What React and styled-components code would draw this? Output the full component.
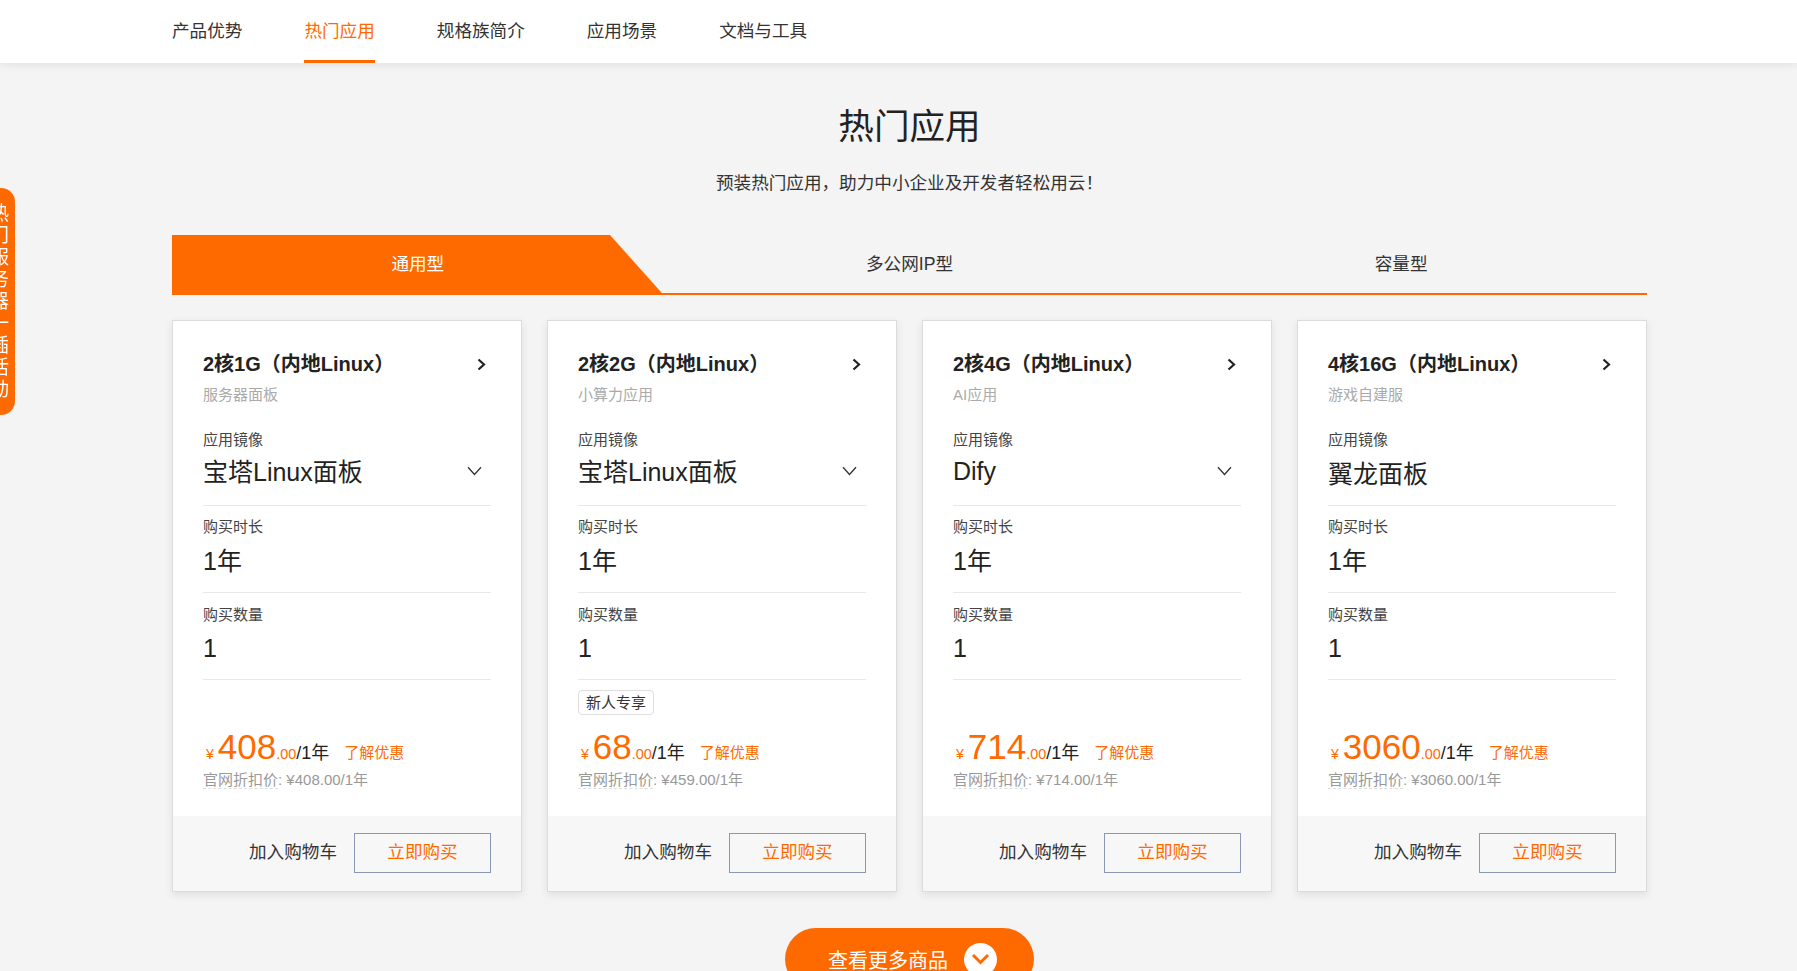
import React from "react";
import styled, { createGlobalStyle } from "styled-components";

const ORANGE = "#ff6a00";

const plans = [
  { title: "2核1G（内地Linux）", desc: "服务器面板", image: "宝塔Linux面板", select: true, price: "408", list: "¥408.00/1年" },
  { title: "2核2G（内地Linux）", desc: "小算力应用", image: "宝塔Linux面板", select: true, price: "68", list: "¥459.00/1年", promo: "新人专享" },
  { title: "2核4G（内地Linux）", desc: "AI应用", image: "Dify", latin: true, select: true, price: "714", list: "¥714.00/1年" },
  { title: "4核16G（内地Linux）", desc: "游戏自建服", image: "翼龙面板", price: "3060", list: "¥3060.00/1年" },
];

const navItems = ["产品优势", "热门应用", "规格族简介", "应用场景", "文档与工具"];
const tabs = ["通用型", "多公网IP型", "容量型"];

const GlobalStyle = createGlobalStyle`
  html, body {
    margin: 0;
    height: 100%;
    overflow: hidden;
    background: #f4f4f4;
    color: #222;
    font-family: "Liberation Sans", "Noto Sans CJK SC", sans-serif;
  }
  * { box-sizing: border-box; }
`;

const Nav = styled.nav`
  height: 63px;
  padding-left: 172px;
  display: flex;
  gap: 62px;
  background: #fff;
  box-shadow: 0 2px 8px rgba(0, 0, 0, 0.08);
  position: relative;
`;

const NavItem = styled.a`
  height: 63px;
  padding-bottom: 1px;
  display: flex;
  align-items: center;
  font-size: 17.6px;
  color: ${(p) => (p.$active ? ORANGE : "#333")};
  border-bottom: 3px solid ${(p) => (p.$active ? ORANGE : "transparent")};
`;

const SideTab = styled.div`
  position: fixed;
  left: 0;
  top: 188px;
  width: 15px;
  height: 227px;
  overflow: hidden;
  display: flex;
  align-items: flex-start;
  justify-content: center;
  background: ${ORANGE};
  border-radius: 0 14px 14px 0;
  color: #fff;
  font-size: 19px;
  letter-spacing: 3px;
  writing-mode: vertical-rl;
`;

const SideText = styled.span`
  margin-right: 4px;
  white-space: nowrap;
`;

const Main = styled.main`
  width: 1475px;
  margin-left: 172px;
`;

const Heading = styled.h2`
  margin: 39px 0 0;
  font-size: 35.6px;
  font-weight: 400;
  line-height: 50px;
  text-align: center;
  color: #222;
`;

const Sub = styled.p`
  margin: 19px 0 0;
  font-size: 17.6px;
  line-height: 24px;
  text-align: center;
  color: #333;
`;

const TabRow = styled.div`
  margin-top: 40px;
  height: 60px;
  display: grid;
  grid-template-columns: repeat(3, 1fr);
  border-bottom: 2px solid ${ORANGE};
`;

const Tab = styled.div`
  height: 60px;
  padding-bottom: 6px;
  display: flex;
  align-items: center;
  justify-content: center;
  font-size: 17.6px;
  color: ${(p) => (p.$active ? "#fff" : "#333")};
  background: ${(p) => (p.$active ? ORANGE : "transparent")};
  clip-path: ${(p) => (p.$active ? "polygon(0 0, 438px 0, 100% 100%, 0 100%)" : "none")};
`;

const Cards = styled.div`
  margin-top: 25px;
  display: grid;
  grid-template-columns: repeat(4, 1fr);
  gap: 25px;
`;

const Card = styled.article`
  height: 572px;
  display: flex;
  flex-direction: column;
  background: #fff;
  border: 1px solid #dcdcdc;
  box-shadow: 0 3px 8px rgba(40, 50, 80, 0.1);
`;

const CardBody = styled.div`
  flex: 1;
  padding: 29px 30px 0;
`;

const TitleRow = styled.div`
  height: 28px;
  display: flex;
  align-items: center;
  justify-content: space-between;
  padding-right: 5px;
`;

const Title = styled.h3`
  margin: 0;
  padding-bottom: 4px;
  font-size: 20px;
  font-weight: 700;
  color: #222;
`;

const Desc = styled.div`
  margin-top: 7px;
  font-size: 15px;
  line-height: 20px;
  color: #aaa;
`;

const Field = styled.div`
  padding: ${(p) => p.$top || "11px"} 0 ${(p) => p.$bottom || "12px"};
  border-bottom: 1px solid #e8e8e8;
`;

const FieldLabel = styled.div`
  font-size: 15px;
  line-height: 20px;
  color: #444;
`;

const FieldValue = styled.div`
  height: 37px;
  padding: 0 9px ${(p) => (p.$latin ? "3px" : "5px")} 0;
  margin-top: ${(p) => (p.$select ? "4px" : "6px")};
  display: flex;
  align-items: center;
  justify-content: space-between;
  font-size: 25px;
  color: #222;
`;

const SelectIcon = styled.svg`
  margin-top: ${(p) => (p.$latin ? "0" : "2px")};
`;

const PriceBlock = styled.div`
  padding-top: 10px;
`;

const PromoSlot = styled.div`
  height: 25px;
`;

const Promo = styled.span`
  display: inline-flex;
  align-items: center;
  height: 25px;
  padding: 0 7px 3px;
  font-size: 15px;
  color: #333;
  background: #fff;
  border: 1px solid #ddd;
  border-radius: 4px;
`;

const PriceRow = styled.div`
  margin-top: 12px;
  height: 40px;
  display: flex;
  align-items: baseline;
  color: ${ORANGE};
  line-height: 40px;
`;

const Yen = styled.span`
  font-size: 14px;
  margin: 0 4px 0 3px;
`;

const Amount = styled.span`
  font-size: 35px;
`;

const Cents = styled.span`
  font-size: 14.4px;
`;

const Period = styled.span`
  font-size: 18px;
  color: #222;
`;

const Learn = styled.a`
  margin-left: 15px;
  font-size: 15px;
  transform: translateY(-1px);
`;

const ListPrice = styled.div`
  margin-top: 3px;
  font-size: 15px;
  line-height: 20px;
  color: #999;
`;

const Dashed = styled.span`
  border-bottom: 1px dashed #ddd;
`;

const CardFoot = styled.div`
  height: 75px;
  padding: 0 30px 2px 0;
  display: flex;
  align-items: center;
  justify-content: flex-end;
  gap: 17px;
  background: #f7f7f7;
`;

const Cart = styled.a`
  padding-bottom: 4px;
  font-size: 17.6px;
  color: #333;
`;

const BuyButton = styled.button`
  width: 137px;
  height: 40px;
  padding: 0 0 4px;
  font-family: inherit;
  font-size: 17.6px;
  color: ${ORANGE};
  background: transparent;
  border: 1px solid #8a97b5;
`;

const MoreWrap = styled.div`
  margin-top: 36px;
  display: flex;
  justify-content: center;
`;

const MoreButton = styled.button`
  width: 249px;
  height: 62px;
  padding: 0 0 0 43px;
  display: flex;
  align-items: center;
  gap: 16px;
  font-family: inherit;
  font-size: 20px;
  color: #fff;
  background: ${ORANGE};
  border: 0;
  border-radius: 31px;
`;

const MoreIcon = styled.span`
  width: 33px;
  height: 33px;
  display: flex;
  align-items: center;
  justify-content: center;
  background: #fff;
  border-radius: 50%;
`;

const ChevronRight = () => (
  <svg width="9" height="13" viewBox="0 0 9 13" fill="none">
    <path d="M1.5 1.5 7 6.5 1.5 11.5" stroke="#222" strokeWidth="2.2" />
  </svg>
);

const ChevronDown = ({ latin }) => (
  <SelectIcon $latin={latin} width="15" height="10" viewBox="0 0 15 10" fill="none">
    <path d="M1 1.2 7.5 8.5 14 1.2" stroke="#333" strokeWidth="1.3" />
  </SelectIcon>
);

const MoreChevron = () => (
  <svg width="19" height="12" viewBox="0 0 19 12" fill="none">
    <path d="M2 2 9.5 9.5 17 2" stroke={ORANGE} strokeWidth="3" />
  </svg>
);

const PlanCard = ({ plan }) => (
  <Card>
    <CardBody>
      <TitleRow>
        <Title>{plan.title}</Title>
        <ChevronRight />
      </TitleRow>
      <Desc>{plan.desc}</Desc>
      <Field $top="25px" $bottom={plan.select ? "14px" : "12px"}>
        <FieldLabel>应用镜像</FieldLabel>
        <FieldValue $select={plan.select} $latin={plan.latin}>
          {plan.image}
          {plan.select && <ChevronDown latin={plan.latin} />}
        </FieldValue>
      </Field>
      <Field>
        <FieldLabel>购买时长</FieldLabel>
        <FieldValue>1年</FieldValue>
      </Field>
      <Field $top="12px" $bottom="11px">
        <FieldLabel>购买数量</FieldLabel>
        <FieldValue $latin>1</FieldValue>
      </Field>
      <PriceBlock>
        <PromoSlot>{plan.promo && <Promo>{plan.promo}</Promo>}</PromoSlot>
        <PriceRow>
          <Yen>¥</Yen>
          <Amount>{plan.price}</Amount>
          <Cents>.00</Cents>
          <Period>/1年</Period>
          <Learn>了解优惠</Learn>
        </PriceRow>
        <ListPrice>
          <Dashed>官网折扣价</Dashed>: {plan.list}
        </ListPrice>
      </PriceBlock>
    </CardBody>
    <CardFoot>
      <Cart>加入购物车</Cart>
      <BuyButton>立即购买</BuyButton>
    </CardFoot>
  </Card>
);

const App = () => (
  <>
    <GlobalStyle />
    <Nav>
      {navItems.map((item, i) => (
        <NavItem key={item} $active={i === 1}>
          {item}
        </NavItem>
      ))}
    </Nav>
    <SideTab>
      <SideText>热门服务器一插活动</SideText>
    </SideTab>
    <Main>
      <Heading>热门应用</Heading>
      <Sub>预装热门应用，助力中小企业及开发者轻松用云！</Sub>
      <TabRow>
        {tabs.map((tab, i) => (
          <Tab key={tab} $active={i === 0}>
            {tab}
          </Tab>
        ))}
      </TabRow>
      <Cards>
        {plans.map((plan) => (
          <PlanCard key={plan.title} plan={plan} />
        ))}
      </Cards>
      <MoreWrap>
        <MoreButton>
          查看更多商品
          <MoreIcon>
            <MoreChevron />
          </MoreIcon>
        </MoreButton>
      </MoreWrap>
    </Main>
  </>
);

export default App;
